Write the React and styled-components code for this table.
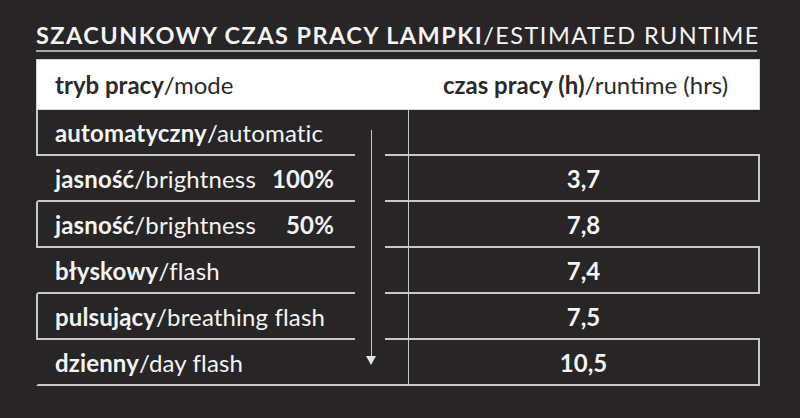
import React from "react";
import styled, { createGlobalStyle } from "styled-components";

const GlobalStyle = createGlobalStyle`
  html, body {
    margin: 0;
    padding: 0;
    background: #272526;
  }
  * {
    box-sizing: border-box;
  }
`;

const LINE = "#c8c8c8";

const Page = styled.div`
  width: 800px;
  height: 418px;
  padding: 21px 0 0 36px;
  background: #272526;
  font-family: Lato, "Open Sans", sans-serif;
  color: #f4f4f4;
`;

const Title = styled.h1`
  width: 721px;
  margin: 0 0 7px;
  padding-bottom: 1px;
  font-size: 23.5px;
  line-height: 28px;
  font-weight: 400;
  letter-spacing: 1.45px;
  white-space: nowrap;
  border-bottom: 2px solid #a9a9a9;

  b {
    font-weight: 700;
  }
`;

const Header = styled.div`
  display: grid;
  grid-template-columns: 373px 351px;
  width: 724px;
  height: 51px;
  align-items: center;
  background: #ffffff;
  border: 1px solid #d6d6d6;
  color: #2b2a2a;
  font-size: 24px;

  b {
    font-weight: 700;
  }
`;

const HeadLeft = styled.div`
  padding-left: 18px;
`;

const HeadRight = styled.div`
  text-align: center;
`;

const Table = styled.div`
  display: grid;
  grid-template-columns: 319px 30px 375px;
  grid-auto-rows: 46px;
  width: 724px;
`;

const ModeCell = styled.div`
  grid-column: 1;
  display: flex;
  align-items: center;
  padding: 0 21px 0 17px;
  font-size: 24px;
  letter-spacing: 0.15px;
  white-space: nowrap;
  border-bottom: 2px solid ${LINE};
  border-left: 2px solid ${(p) => (p.$boxed ? LINE : "transparent")};

  b {
    font-weight: 700;
  }
`;

const Percent = styled.span`
  margin-left: auto;
  font-weight: 700;
`;

const ArrowLane = styled.div`
  grid-column: 2;
  grid-row: 1 / 7;
  display: flex;
  flex-direction: column;
  align-items: center;
  padding: 20px 0 19px 2px;
  border-bottom: 2px solid ${LINE};
`;

const Shaft = styled.div`
  flex: 1;
  width: 1px;
  background: ${LINE};
`;

const Head = styled.div`
  width: 0;
  height: 0;
  border-left: 5px solid transparent;
  border-right: 5px solid transparent;
  border-top: 9px solid #e6e6e6;
`;

const TimeCell = styled.div`
  grid-column: 3;
  display: flex;
  padding-left: 23px;
  border-bottom: 2px solid ${LINE};
`;

const Value = styled.div`
  flex: 1;
  display: flex;
  align-items: center;
  justify-content: center;
  font-size: 24px;
  font-weight: 700;
  border-left: 1px solid ${LINE};
  border-right: 2px solid ${(p) => (p.$boxed ? LINE : "transparent")};
`;

const rows = [
  { bold: "automatyczny", rest: "automatic", time: "" },
  { bold: "jasność", rest: "brightness", pct: "100%", time: "3,7" },
  { bold: "jasność", rest: "brightness", pct: "50%", time: "7,8" },
  { bold: "błyskowy", rest: "flash", time: "7,4" },
  { bold: "pulsujący", rest: "breathing flash", time: "7,5" },
  { bold: "dzienny", rest: "day flash", time: "10,5" },
];

export default function App() {
  return (
    <>
      <GlobalStyle />
      <Page>
        <Title>
          <b>SZACUNKOWY CZAS PRACY LAMPKI</b>/ESTIMATED RUNTIME
        </Title>
        <Header>
          <HeadLeft>
            <b>tryb pracy</b>/mode
          </HeadLeft>
          <HeadRight>
            <b>czas pracy (h)</b>/runtime (hrs)
          </HeadRight>
        </Header>
        <Table>
          <ArrowLane>
            <Shaft />
            <Head />
          </ArrowLane>
          {rows.map((r, i) => (
            <React.Fragment key={i}>
              <ModeCell $boxed={i % 2 === 0} style={{ gridRow: i + 1 }}>
                <span>
                  <b>{r.bold}</b>/{r.rest}
                </span>
                {r.pct && <Percent>{r.pct}</Percent>}
              </ModeCell>
              <TimeCell style={{ gridRow: i + 1 }}>
                <Value $boxed={i % 2 === 1}>{r.time}</Value>
              </TimeCell>
            </React.Fragment>
          ))}
        </Table>
      </Page>
    </>
  );
}
